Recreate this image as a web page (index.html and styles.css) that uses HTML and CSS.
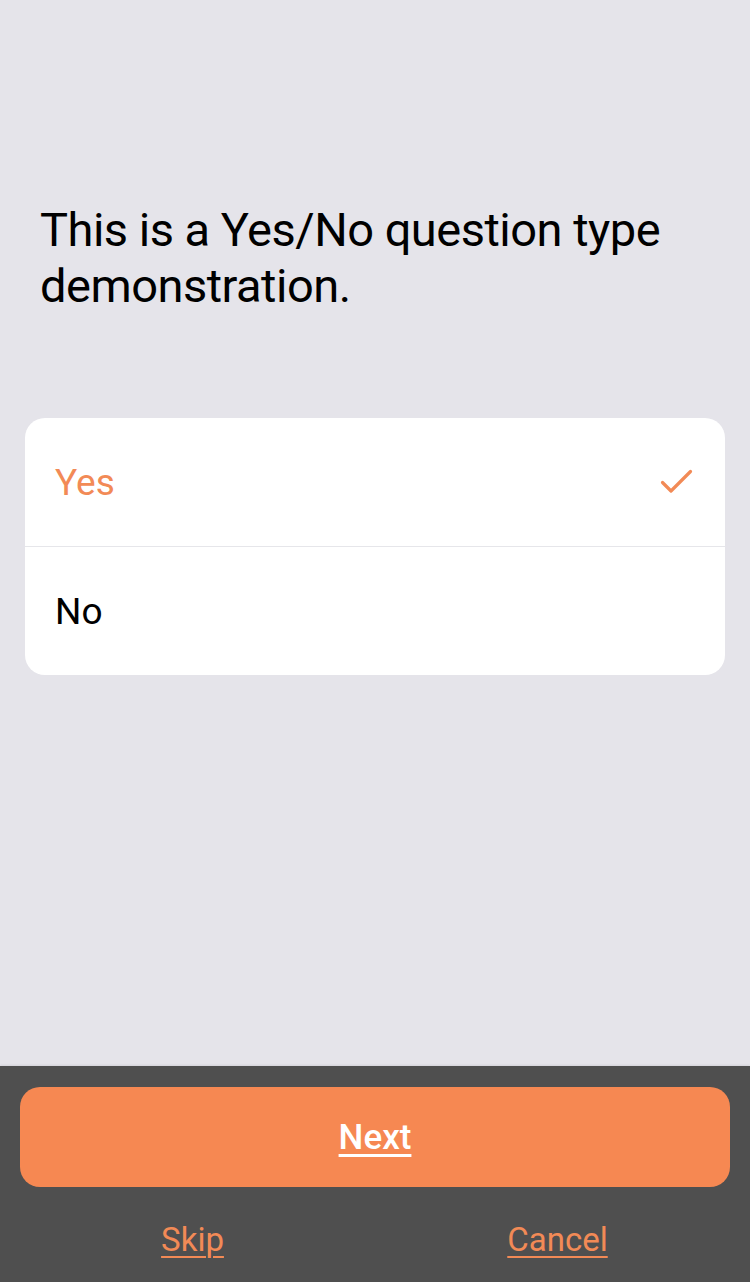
FILE: index.html
```html
<!DOCTYPE html>
<html lang="en">
<head>
<meta charset="utf-8">
<title>Yes/No question</title>
<link rel="stylesheet" href="styles.css">
</head>
<body>
<div class="screen">
  <main class="content">
    <h1 class="question">This is a Yes/No question type demonstration.</h1>
    <div class="card">
      <div class="option selected">
        <span class="label">Yes</span>
        <svg class="check" width="34" height="28" viewBox="0 0 34 28"><path d="M2.5 14.5 L11 23 L30.5 3.5" fill="none" stroke="#f28a56" stroke-width="3.2" stroke-linecap="round" stroke-linejoin="round"/></svg>
      </div>
      <div class="option">
        <span class="label">No</span>
      </div>
    </div>
  </main>
  <footer class="footer">
    <a class="next" href="#">Next</a>
    <div class="links">
      <a class="link" href="#">Skip</a>
      <a class="link" href="#">Cancel</a>
    </div>
  </footer>
</div>
</body>
</html>
```

FILE: styles.css
```css
html, body {
  margin: 0;
  padding: 0;
}
body {
  font-family: Roboto, "Liberation Sans", sans-serif;
  background: #e5e4ea;
}
.screen {
  width: 750px;
  height: 1282px;
  display: flex;
  flex-direction: column;
}
.content {
  flex: 1;
  padding: 0 25px;
}
.question {
  margin: 202px 0 0;
  padding: 0 15px;
  font-size: 47px;
  line-height: 56px;
  font-weight: 400;
  color: #000;
  letter-spacing: -0.5px;
}
.card {
  margin-top: 104px;
  background: #fff;
  border-radius: 20px;
  overflow: hidden;
}
.option {
  height: 128px;
  display: flex;
  align-items: center;
  justify-content: space-between;
  padding: 0 30px;
  font-size: 37px;
  color: #000;
}
.option + .option {
  border-top: 1px solid #e6e6ea;
}
.option.selected .label {
  color: #f28a56;
}
.check {
  margin-right: 1px;
}
.footer {
  height: 216px;
  background: #4f4f4f;
  box-shadow: 0 -1px 2px rgba(0,0,0,0.08);
  padding: 21px 20px 0;
  box-sizing: border-box;
}
.next {
  display: flex;
  align-items: center;
  justify-content: center;
  height: 100px;
  background: #f68852;
  border-radius: 20px;
  color: #fff;
  font-size: 35px;
  font-weight: 500;
  text-decoration: underline;
  text-underline-offset: 5px;
  text-decoration-thickness: 3px;
}
.links {
  display: flex;
  margin: 0 -10px;
  height: 104px;
  align-items: center;
}
.link {
  flex: 1;
  text-align: center;
  color: #f28a56;
  font-size: 33px;
  text-decoration: underline;
  text-underline-offset: 5px;
  text-decoration-thickness: 2px;
}
```
